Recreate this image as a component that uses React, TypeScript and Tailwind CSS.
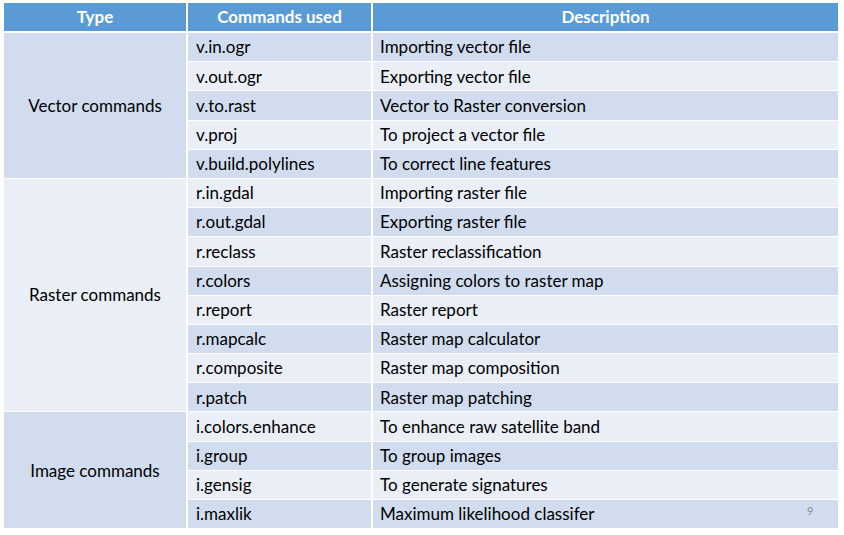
const groups = [
  {
    type: 'Vector commands',
    dark: true,
    rows: [
      ['v.in.ogr', 'Importing vector file'],
      ['v.out.ogr', 'Exporting vector file'],
      ['v.to.rast', 'Vector to Raster conversion'],
      ['v.proj', 'To project a vector file'],
      ['v.build.polylines', 'To correct line features'],
    ],
  },
  {
    type: 'Raster commands',
    dark: false,
    rows: [
      ['r.in.gdal', 'Importing raster file'],
      ['r.out.gdal', 'Exporting raster file'],
      ['r.reclass', 'Raster reclassification'],
      ['r.colors', 'Assigning colors to raster map'],
      ['r.report', 'Raster report'],
      ['r.mapcalc', 'Raster map calculator'],
      ['r.composite', 'Raster map composition'],
      ['r.patch', 'Raster map patching'],
    ],
  },
  {
    type: 'Image commands',
    dark: true,
    rows: [
      ['i.colors.enhance', 'To enhance raw satellite band'],
      ['i.group', 'To group images'],
      ['i.gensig', 'To generate signatures'],
      ['i.maxlik', 'Maximum likelihood classifer'],
    ],
  },
];

const spans = ['row-span-5', 'row-span-8', 'row-span-4'];

export default function App() {
  let rowIndex = 0;

  return (
    <div
      className="w-[844px] h-[535px] bg-white relative overflow-hidden text-black"
      style={{ fontFamily: 'Lato, "Liberation Sans", sans-serif' }}
    >
      <div className="ml-[4px] mt-[3px] w-[834px]">
        {/* header */}
        <div className="grid grid-cols-[182px_2px_183px_2px_1fr] h-[28px] text-white font-bold text-[17px]">
          <div className="flex items-center justify-center bg-[#5b9bd5]">Type</div>
          <div />
          <div className="flex items-center justify-center bg-[#5b9bd5]">Commands used</div>
          <div />
          <div className="flex items-center justify-center bg-[#5b9bd5]">Description</div>
        </div>
        {/* body */}
        <div className="mt-[2px] grid grid-cols-[182px_2px_183px_2px_1fr] auto-rows-[28.2px] gap-y-[1px] text-[17px]">
          {groups.map((g, gi) => {
            const cells = [];
            cells.push(
              <div
                key={'t' + gi}
                className={`${spans[gi]} col-start-1 flex items-center justify-center ${
                  g.dark ? 'bg-[#d1ddee]' : 'bg-[#e9eef7]'
                }`}
              >
                {g.type}
              </div>
            );
            g.rows.forEach(([cmd, desc], i) => {
              const dark = rowIndex % 2 === 0;
              rowIndex++;
              const bg = dark ? 'bg-[#d1ddee]' : 'bg-[#e9eef7]';
              cells.push(
                <div key={'c' + gi + i} className={`col-start-3 flex items-center pl-[8px] ${bg}`}>
                  {cmd}
                </div>
              );
              cells.push(
                <div key={'d' + gi + i} className={`col-start-5 flex items-center pl-[7px] ${bg}`}>
                  {desc}
                </div>
              );
            });
            return cells;
          })}
        </div>
      </div>
      <div className="absolute left-[807px] top-[503px] text-[11px] text-[#8c8c8c]">9</div>
    </div>
  );
}
